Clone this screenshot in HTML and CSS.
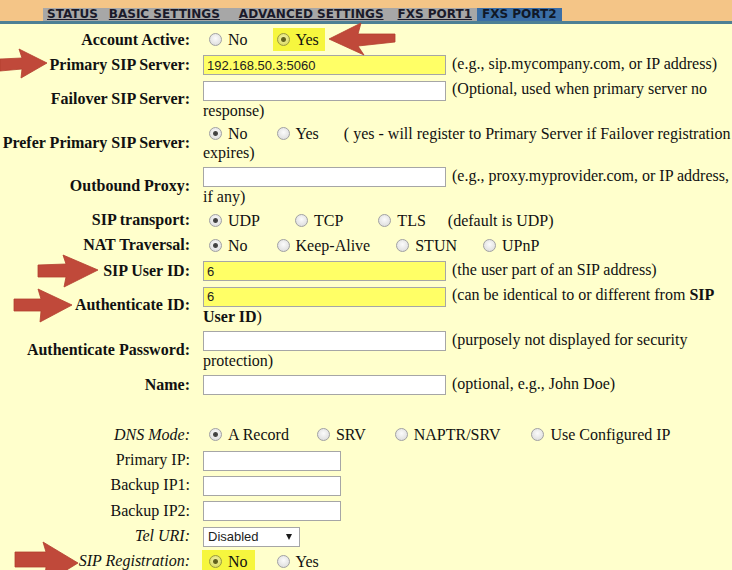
FILE: index.html
```html
<!DOCTYPE html>
<html>
<head>
<meta charset="utf-8">
<title>FXS PORT2</title>
<link rel="stylesheet" href="styles.css">
</head>
<body>
<div class="topbar">
  <nav class="tabs">
    <a class="tab t-status">STATUS</a>
    <a class="tab t-basic">BASIC SETTINGS</a>
    <a class="tab t-adv">ADVANCED SETTINGS</a>
    <a class="tab t-p1">FXS PORT1</a>
    <a class="tab t-p2 active">FXS PORT2</a>
  </nav>
</div>
<div class="rule"></div>

<table class="form">
  <tr>
    <td class="lbl">Account Active:</td>
    <td class="fld"><label class="opt mr23"><input class="radio" type="radio" name="aa">No</label><span class="hl hl-yes"><label class="opt"><input class="radio" type="radio" name="aa" checked>Yes</label></span></td>
  </tr>
  <tr>
    <td class="lbl">Primary SIP Server:</td>
    <td class="fld"><input class="text wide yellow" type="text" value="192.168.50.3:5060"> (e.g., sip.mycompany.com, or IP address)</td>
  </tr>
  <tr>
    <td class="lbl">Failover SIP Server:</td>
    <td class="fld"><input class="text wide" type="text"> (Optional, used when primary server no response)</td>
  </tr>
  <tr>
    <td class="lbl">Prefer Primary SIP Server:</td>
    <td class="fld"><label class="opt mr23"><input class="radio" type="radio" name="pp" checked>No</label><label class="opt mr25"><input class="radio" type="radio" name="pp">Yes</label>( yes - will register to Primary Server if Failover registration expires)</td>
  </tr>
  <tr>
    <td class="lbl">Outbound Proxy:</td>
    <td class="fld"><input class="text wide" type="text"> (e.g., proxy.myprovider.com, or IP address, if any)</td>
  </tr>
  <tr>
    <td class="lbl">SIP transport:</td>
    <td class="fld"><label class="opt mr29"><input class="radio" type="radio" name="tr" checked>UDP</label><label class="opt mr29"><input class="radio" type="radio" name="tr">TCP</label><label class="opt mr22"><input class="radio" type="radio" name="tr">TLS</label>(default is UDP)</td>
  </tr>
  <tr>
    <td class="lbl">NAT Traversal:</td>
    <td class="fld"><label class="opt mr23"><input class="radio" type="radio" name="nat" checked>No</label><label class="opt mr20"><input class="radio" type="radio" name="nat">Keep-Alive</label><label class="opt mr20"><input class="radio" type="radio" name="nat">STUN</label><label class="opt"><input class="radio" type="radio" name="nat">UPnP</label></td>
  </tr>
  <tr>
    <td class="lbl">SIP User ID:</td>
    <td class="fld"><input class="text wide yellow" type="text" value="6"> (the user part of an SIP address)</td>
  </tr>
  <tr>
    <td class="lbl">Authenticate ID:</td>
    <td class="fld"><input class="text wide yellow" type="text" value="6"> (can be identical to or different from <b>SIP User ID</b>)</td>
  </tr>
  <tr>
    <td class="lbl">Authenticate Password:</td>
    <td class="fld"><input class="text wide" type="password"> (purposely not displayed for security protection)</td>
  </tr>
  <tr>
    <td class="lbl">Name:</td>
    <td class="fld"><input class="text wide" type="text"> (optional, e.g., John Doe)</td>
  </tr>
  <tr>
    <td class="lbl"></td>
    <td class="fld"></td>
  </tr>
  <tr>
    <td class="lbl it">DNS Mode:</td>
    <td class="fld"><label class="opt mr22"><input class="radio" type="radio" name="dns" checked>A Record</label><label class="opt mr23"><input class="radio" type="radio" name="dns">SRV</label><label class="opt mr25"><input class="radio" type="radio" name="dns">NAPTR/SRV</label><label class="opt"><input class="radio" type="radio" name="dns">Use Configured IP</label></td>
  </tr>
  <tr>
    <td class="lbl plain">Primary IP:</td>
    <td class="fld"><input class="text short" type="text"></td>
  </tr>
  <tr>
    <td class="lbl plain">Backup IP1:</td>
    <td class="fld"><input class="text short" type="text"></td>
  </tr>
  <tr>
    <td class="lbl plain">Backup IP2:</td>
    <td class="fld"><input class="text short" type="text"></td>
  </tr>
  <tr>
    <td class="lbl it">Tel URI:</td>
    <td class="fld"><span class="select"><select><option>Disabled</option><option>User=Phone</option><option>Enabled</option></select><span class="caret"></span></span></td>
  </tr>
  <tr>
    <td class="lbl it">SIP Registration:</td>
    <td class="fld"><span class="hl hl-no"><label class="opt"><input class="radio" type="radio" name="reg" checked>No</label></span><label class="opt"><input class="radio" type="radio" name="reg">Yes</label></td>
  </tr>
</table>

<svg class="arrows" width="732" height="570" viewBox="0 0 732 570" aria-hidden="true">
  <polygon points="329,39 361,23 358,34 395,34 395,42 358,46 364,55"/>
  <polygon points="47,63 19,49 22,58 0,59 0,71 22,69 21,78"/>
  <polygon points="98,270 63,255 66,264 38,265 38,277 66,277 64,287"/>
  <polygon points="72,305 38,289 41,299 14,299 14,311 41,311 40,322"/>
  <polygon points="78,563 43,542 46,552 15,552 15,567 46,567 44,584"/>
</svg>
</body>
</html>
```

FILE: styles.css
```css
html, body {
  margin: 0;
  padding: 0;
}

body {
  position: relative;
  background: #ffffcc;
  color: #111111;
  font-family: "Liberation Serif", "Times New Roman", serif;
  font-size: 16px;
  width: 732px;
  height: 570px;
  overflow: hidden;
}

/* ---------- top navigation ---------- */
.topbar {
  height: 21px;
  background: #f4c587;
  padding-left: 43px;
  display: flex;
  align-items: flex-end;
}

.tabs {
  display: flex;
  height: 13px;
  background: #a7a7a7;
}

.tab {
  font-family: "DejaVu Sans", Verdana, sans-serif;
  font-weight: bold;
  font-size: 12px;
  line-height: 13px;
  color: #1a1a2a;
  text-decoration: underline;
  padding: 0 4px;
  white-space: nowrap;
}

.t-basic { margin-left: 3px; }
.t-adv { margin-left: 11px; }
.t-p1 { margin-left: 6px; }
.t-p2 { margin-left: 1px; padding: 0 5px 0 5px; }

.tab.active {
  background: #3b6ea6;
  text-decoration: none;
  color: #101828;
}

.rule {
  height: 3px;
  background: #4d8094;
}

/* ---------- form table ---------- */
.form {
  border-collapse: collapse;
  width: 732px;
  margin-top: 3px;
}

.form td {
  height: 21px;
  padding: 2px 0;
  vertical-align: middle;
}

.lbl {
  width: 190px;
  padding-right: 13px !important;
  text-align: right;
  font-weight: bold;
  white-space: nowrap;
}

.lbl.it {
  font-weight: normal;
  font-style: italic;
}

.lbl.plain {
  font-weight: normal;
}

.fld {
  line-height: 19px;
}

/* text inputs */
.text {
  box-sizing: border-box;
  height: 20px;
  border: 1px solid #a6a6a6;
  background: #ffffff;
  font-family: "Liberation Sans", Arial, sans-serif;
  font-size: 13px;
  color: #222;
  padding: 0 3px;
  margin: 0 2px 0 0;
  vertical-align: middle;
}

.text.wide { width: 243px; }
.text.short { width: 138px; }
.text.yellow { background: #ffff66; }

/* radios */
.opt {
  white-space: nowrap;
}

.radio {
  -webkit-appearance: none;
  appearance: none;
  box-sizing: border-box;
  width: 13px;
  height: 13px;
  margin: 0 6px;
  border: 1px solid #a2a2a2;
  border-radius: 50%;
  background: radial-gradient(circle at 50% 40%, #fbfbfb 0, #e2e2e2 70%, #cfcfcf 100%);
  vertical-align: -1px;
}

.radio:checked {
  background:
    radial-gradient(circle, #3a3a3a 0, #4a4a4a 2px, rgba(90,90,90,0) 3px),
    radial-gradient(circle at 50% 40%, #fbfbfb 0, #e2e2e2 70%, #cfcfcf 100%);
}

.mr20 { margin-right: 20px; }
.mr22 { margin-right: 22px; }
.mr23 { margin-right: 23px; }
.mr25 { margin-right: 25px; }
.mr29 { margin-right: 29px; }

/* highlights */
.hl {
  display: inline-block;
  background: #f6f63e;
  padding: 2px 5px 2px 0;
  margin: -2px 0;
  line-height: 19px;
}

.hl-yes {
  margin-left: 2px;
  padding-right: 6px;
}

.hl-yes .radio {
  margin-left: 4px;
  background:
    radial-gradient(circle, #5c5c1c 0, #66661e 2px, rgba(90,90,20,0) 3px),
    radial-gradient(circle at 50% 40%, #f4f4b0 0, #dede6a 70%, #c8c850 100%);
  border-color: #9a9a40;
}

.hl-no {
  margin-left: -1px;
  margin-right: 16px;
  padding-right: 7px;
}

.hl-no .radio {
  margin-left: 7px;
  background:
    radial-gradient(circle, #5c5c1c 0, #66661e 2px, rgba(90,90,20,0) 3px),
    radial-gradient(circle at 50% 40%, #f4f4b0 0, #dede6a 70%, #c8c850 100%);
  border-color: #9a9a40;
}

/* select */
.select {
  position: relative;
  display: inline-block;
  vertical-align: middle;
}

.select select {
  -webkit-appearance: none;
  appearance: none;
  box-sizing: border-box;
  width: 97px;
  height: 20px;
  border: 1px solid #a6a6a6;
  background: #ffffff;
  font-family: "Liberation Sans", Arial, sans-serif;
  font-size: 13px;
  color: #222;
  padding: 0 0 0 4px;
  margin: 0;
  display: block;
}

.caret {
  position: absolute;
  right: 8px;
  top: 7px;
  width: 0;
  height: 0;
  border-left: 3px solid transparent;
  border-right: 3px solid transparent;
  border-top: 6px solid #1a1a1a;
  pointer-events: none;
}

/* annotation arrows overlay */
.arrows {
  position: absolute;
  top: 0;
  left: 0;
  pointer-events: none;
}

.arrows polygon {
  fill: #c0493a;
  stroke: #b2402f;
  stroke-width: 0.8;
  stroke-linejoin: round;
}
```
